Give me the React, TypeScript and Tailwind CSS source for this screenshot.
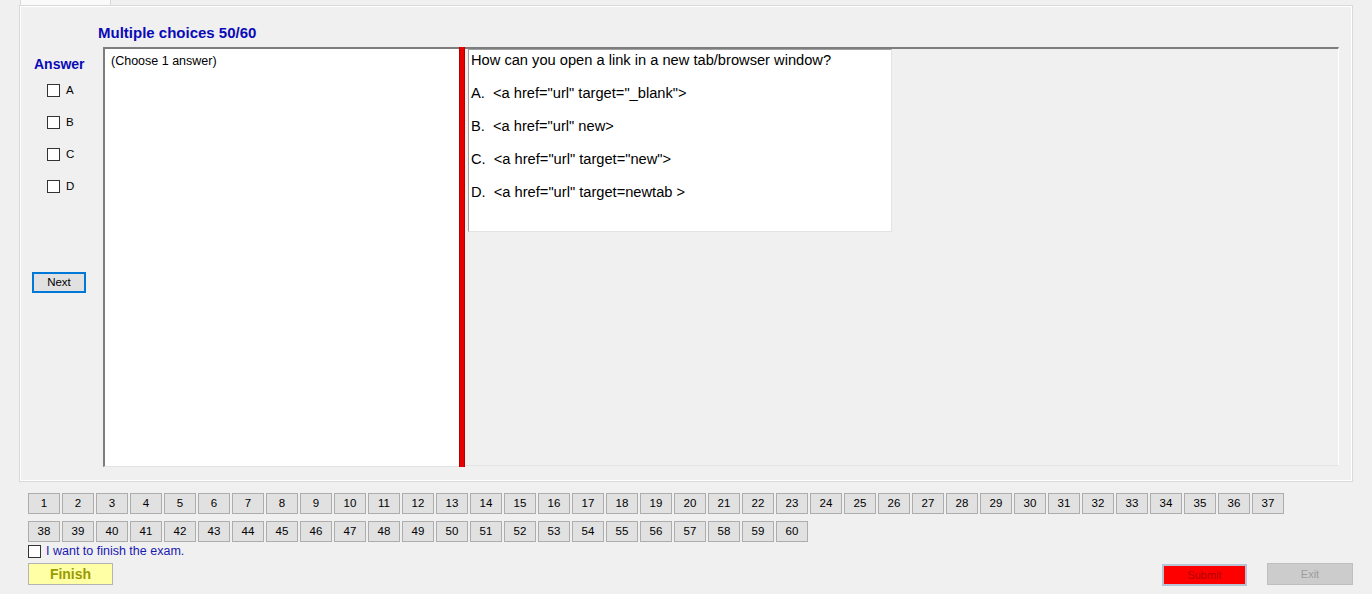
import React from "react";

const options = [
  'A.  <a href="url" target="_blank">',
  'B.  <a href="url" new>',
  'C.  <a href="url" target="new">',
  'D.  <a href="url" target=newtab >',
];

const row1 = Array.from({ length: 37 }, (_, i) => i + 1);
const row2 = Array.from({ length: 23 }, (_, i) => i + 38);

const NumButton: React.FC<{ n: number }> = ({ n }) => (
  <button
    type="button"
    className="grid h-[21px] w-[32px] place-items-center border border-[#adadad] bg-[#e1e1e1] text-[11.5px] leading-none text-black"
  >
    {n}
  </button>
);

const Box: React.FC<{ className?: string }> = ({ className = "" }) => (
  <span
    className={`block h-[13px] w-[13px] shrink-0 border border-[#333333] bg-white ${className}`}
  />
);

export default function App() {
  return (
    <div
      className="h-[594px] w-[1372px] overflow-hidden bg-[#f0f0f0] text-black"
      style={{ fontFamily: '"Liberation Sans", Arial, sans-serif' }}
    >
      {/* Tab strip */}
      <div className="flex h-[5px]">
        <div className="ml-[20px] h-full w-[91px] border-x border-[#d9d9d9] bg-[#fafafa]" />
      </div>

      {/* Tab page */}
      <div className="ml-[19px] h-[477px] w-[1334px] border border-[#d9d9d9] shadow-[inset_1px_1px_0_#ffffff,inset_-1px_-1px_0_#ffffff]">
        <div className="pl-[78px] pt-[18px] text-[15px] font-bold leading-[18px] text-[#0a0ab8]">
          Multiple choices 50/60
        </div>

        <div className="mt-[5px] flex">
          {/* Answer column */}
          <div className="flex w-[83px] flex-col">
            <div className="pl-[14px] pt-[9px] text-[14px] font-bold leading-[16px] text-[#0a0ab8]">
              Answer
            </div>
            <div className="mt-[12px] flex flex-col gap-[19px] pl-[27px]">
              {["A", "B", "C", "D"].map((l) => (
                <label key={l} className="flex h-[13px] items-center gap-[6px] text-[11.5px] leading-none">
                  <Box />
                  {l}
                </label>
              ))}
            </div>
            <button
              type="button"
              className="ml-[12px] mt-[79px] grid h-[21px] w-[54px] place-items-center border-2 border-[#0078d7] bg-[#e1e1e1] text-[11.5px] leading-none"
            >
              Next
            </button>
          </div>

          {/* Answer text box */}
          <div className="h-[420px] w-[356px] border-b border-l-2 border-t-2 border-b-[#e3e3e3] border-l-[#7d7d7d] border-t-[#7d7d7d] bg-white px-[6px] pt-[5px] text-[12.5px] leading-[14px]">
            (Choose 1 answer)
          </div>

          {/* Splitter */}
          <div className="h-[420px] w-[6px] border-x border-[#b00000] bg-[#e60000]" />

          {/* Question panel */}
          <div className="h-[419px] w-[874px] border-r border-t-2 border-b border-r-white border-t-[#7d7d7d] border-b-[#e3e3e3] pl-[3px]">
            <div className="h-[183px] w-[424px] border border-b-[#e3e3e3] border-l-[#a0a0a0] border-r-[#e3e3e3] border-t-[#a0a0a0] bg-white pl-[2px] pt-[2px]">
              <div className="flex flex-col gap-4 text-[14.67px] leading-[17px] whitespace-pre">
                <div>How can you open a link in a new tab/browser window?</div>
                {options.map((o) => (
                  <div key={o}>{o}</div>
                ))}
              </div>
            </div>
          </div>
        </div>
      </div>

      {/* Question navigation */}
      <div className="mt-[11px] flex flex-col gap-[7px] pl-[28px]">
        <div className="flex gap-[2px]">
          {row1.map((n) => (
            <NumButton key={n} n={n} />
          ))}
        </div>
        <div className="flex gap-[2px]">
          {row2.map((n) => (
            <NumButton key={n} n={n} />
          ))}
        </div>
      </div>

      <label className="ml-[28px] mt-[3px] flex h-[13px] items-center gap-[5px] text-[12.5px] leading-none text-[#1a1ab0]">
        <Box />
        I want to finish the exam.
      </label>

      <div className="mt-[5px] flex items-start justify-between pl-[28px] pr-[19px]">
        <button
          type="button"
          className="grid h-[22px] w-[85px] place-items-center border border-[#b4b4b4] bg-[#ffffa6] text-[14px] font-bold leading-none text-[#9a9a00]"
        >
          Finish
        </button>
        <div className="flex items-start gap-[20px]">
          <button
            type="button"
            className="mt-[1px] grid h-[22px] w-[85px] place-items-center border-2 border-[#b9c3d6] bg-[#ff0000] text-[11px] leading-none text-[#b00000]"
          >
            Submit
          </button>
          <button
            type="button"
            className="grid h-[22px] w-[86px] place-items-center border border-[#bfbfbf] bg-[#cccccc] text-[11px] leading-none text-[#9d9d9d]"
          >
            Exit
          </button>
        </div>
      </div>
    </div>
  );
}
